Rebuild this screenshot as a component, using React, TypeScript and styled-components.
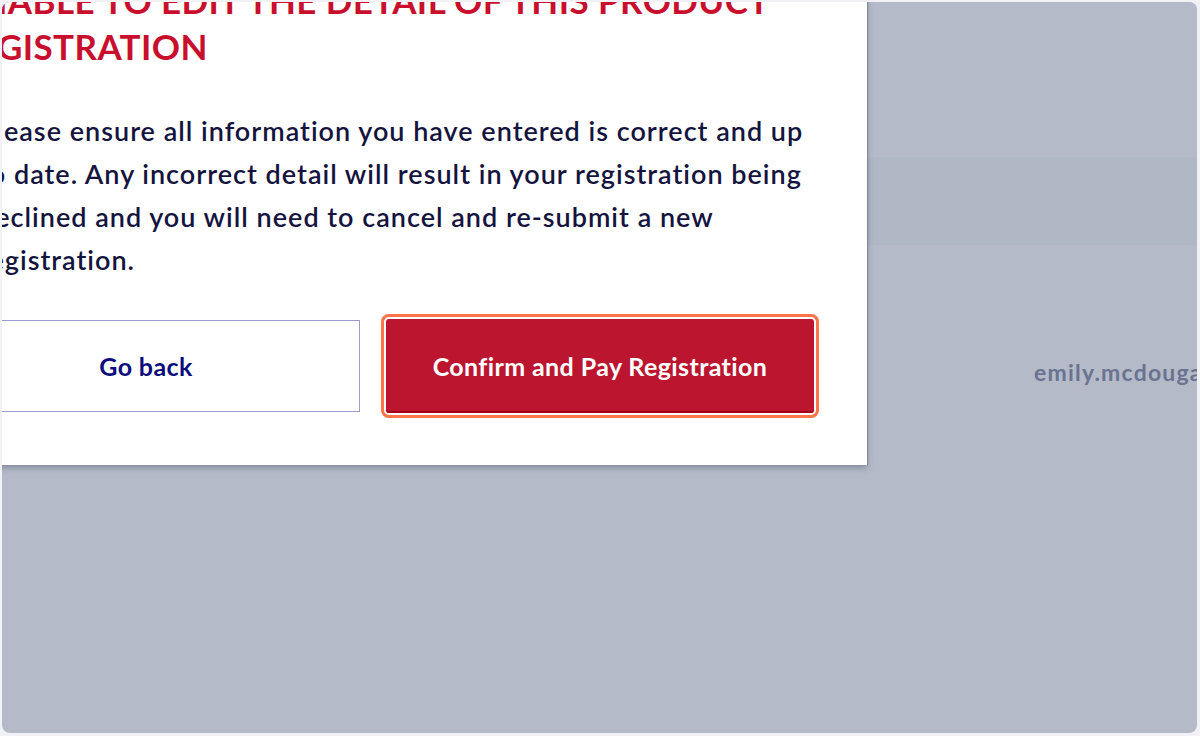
import React from "react";
import styled, { createGlobalStyle } from "styled-components";

const Global = createGlobalStyle`
  html, body { margin: 0; padding: 0; background: #f1f1f6; }
  body { font-family: Lato, "Open Sans", sans-serif; }
  * { box-sizing: border-box; }
`;

const Frame = styled.div`
  width: 1200px;
  height: 736px;
  padding: 2px 3px 3px 2px;
  background: #f1f1f6;
`;

const Screen = styled.div`
  position: relative;
  height: 100%;
  border-radius: 8px;
  overflow: hidden;
  background: #b4bac7;
  display: flex;
  flex-direction: column;
`;

const Band = styled.div<{ $h: number; $bg: string }>`
  height: ${(p) => p.$h}px;
  flex-shrink: 0;
  background: ${(p) => p.$bg};
`;

const Row = styled.div`
  height: 254px;
  flex-shrink: 0;
  display: flex;
  align-items: center;
  padding-left: 1032px;
`;

const Email = styled.span`
  font-family: Lato, sans-serif;
  font-weight: 700;
  font-size: 23px;
  letter-spacing: 1.2px;
  color: #6a7390;
  white-space: nowrap;
`;

const Modal = styled.div`
  position: absolute;
  left: -102px;
  bottom: 268px;
  width: 967px;
  background: #ffffff;
  box-shadow: 0 3px 6px rgba(50, 60, 80, 0.35), 1px 0 1px rgba(50, 60, 80, 0.25);
  padding: 0 53px 52px 32px;
  display: flex;
  flex-direction: column;
`;

const Title = styled.h2`
  margin: 0 0 40px 22px;
  font-family: Lato, sans-serif;
  font-weight: 700;
  font-size: 35px;
  letter-spacing: 0.4px;
  line-height: 46px;
  color: #c8102e;
  text-transform: uppercase;
  white-space: nowrap;
`;

const Body = styled.p`
  margin: 0 0 38px 47px;
  font-family: Lato, sans-serif;
  font-weight: 600;
  font-size: 27px;
  letter-spacing: 1px;
  line-height: 43px;
  color: #14143e;
  white-space: nowrap;
`;

const Actions = styled.div`
  display: flex;
  align-items: center;
  gap: 26px;
`;

const SecondaryButton = styled.button`
  width: 428px;
  height: 92px;
  background: #fff;
  border: 1px solid #9c9cd0;
  border-radius: 0;
  font-family: Lato, sans-serif;
  font-weight: 700;
  font-size: 25px;
  letter-spacing: 0.4px;
  color: #0c0c7c;
  padding: 0;
`;

const PrimaryButton = styled.button`
  width: 428px;
  height: 94px;
  background: #bb1530;
  border: none;
  border-radius: 3px;
  box-shadow: inset 0 -2px 0 #a80018, 0 0 0 2px #ffffff, 0 0 0 5px #ff7448;
  font-family: Lato, sans-serif;
  font-weight: 700;
  font-size: 25px;
  letter-spacing: 0.4px;
  color: #ffffff;
  padding: 0;
`;

export default function App() {
  return (
    <Frame>
      <Global />
      <Screen>
        <Band $h={155} $bg="#b4bac7" />
        <Band $h={88} $bg="#b0b7c5" />
        <Row>
          <Email>emily.mcdougall@example.com</Email>
        </Row>
        <Modal>
          <Title>
            Unable to edit the detail of this product
            <br />
            registration
          </Title>
          <Body>
            Please ensure all information you have entered is correct and up
            <br />
            to date. Any incorrect detail will result in your registration being
            <br />
            declined and you will need to cancel and re-submit a new
            <br />
            registration.
          </Body>
          <Actions>
            <SecondaryButton>Go back</SecondaryButton>
            <PrimaryButton>Confirm and Pay Registration</PrimaryButton>
          </Actions>
        </Modal>
      </Screen>
    </Frame>
  );
}
